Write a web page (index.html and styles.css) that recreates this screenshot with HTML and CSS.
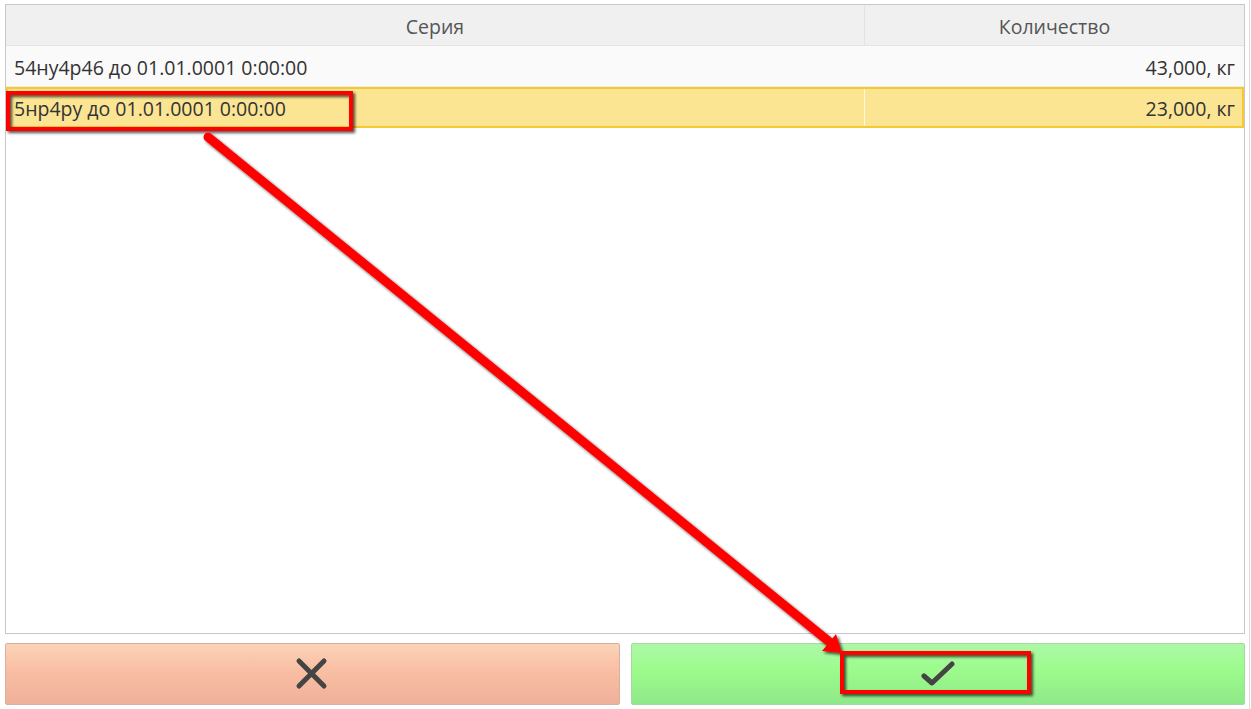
FILE: index.html
```html
<!DOCTYPE html>
<html lang="ru">
<head>
<meta charset="utf-8">
<title>Серии</title>
<link rel="stylesheet" href="styles.css">
</head>
<body>
<div class="page">
  <div class="grid">
    <div class="row head">
      <div class="cell c1">Серия</div>
      <div class="cell c2">Количество</div>
    </div>
    <div class="row">
      <div class="cell c1 left">54ну4р46 до 01.01.0001 0:00:00</div>
      <div class="cell c2 right">43,000, кг</div>
    </div>
    <div class="row sel">
      <div class="cell c1 left">5нр4ру до 01.01.0001 0:00:00</div>
      <div class="cell c2 right">23,000, кг</div>
    </div>
  </div>
  <div class="buttons">
    <button class="btn cancel" type="button" aria-label="Отмена">
      <svg width="34" height="34" viewBox="0 0 34 34"><path d="M4 4 L29 29 M29 4 L4 29" stroke="#444" stroke-width="5" stroke-linecap="round" fill="none"/></svg>
    </button>
    <button class="btn ok" type="button" aria-label="OK">
      <svg width="34" height="28" viewBox="0 0 34 28"><path d="M3 16 L11 23 L31 4" stroke="#444" stroke-width="5" stroke-linecap="round" stroke-linejoin="round" fill="none"/></svg>
    </button>
  </div>
  <div class="scrollline"></div>
  <svg class="annot" width="1251" height="709" viewBox="0 0 1251 709">
    <defs>
      <filter id="sh" x="-20%" y="-20%" width="140%" height="140%">
        <feGaussianBlur in="SourceAlpha" stdDeviation="1.5"/>
        <feOffset dx="2" dy="2" result="b"/>
        <feComponentTransfer><feFuncA type="linear" slope="0.7"/></feComponentTransfer>
        <feMerge><feMergeNode/><feMergeNode in="SourceGraphic"/></feMerge>
      </filter>
    </defs>
    <g filter="url(#sh)">
      <rect x="8" y="93" width="343" height="36" fill="none" stroke="#f00" stroke-width="4"/>
      <rect x="842" y="653" width="187" height="39" fill="none" stroke="#f00" stroke-width="4"/>
      <line x1="208" y1="137" x2="832" y2="644" stroke="#f00" stroke-width="9" stroke-linecap="round"/>
      <polygon points="842,653 822,651 836,634" fill="#f00"/>
    </g>
  </svg>
</div>
</body>
</html>
```
FILE: styles.css
```css
html, body {
  margin: 0;
  padding: 0;
  background: #fff;
}
body {
  font-family: "Open Sans", "Liberation Sans", sans-serif;
  width: 1251px;
  height: 709px;
  overflow: hidden;
}
.page {
  position: relative;
  box-sizing: border-box;
  width: 1251px;
  height: 709px;
  padding: 4px 6px 4px 5px;
  display: flex;
  flex-direction: column;
  gap: 9px;
}
.grid {
  box-sizing: border-box;
  height: 630px;
  border: 1px solid #c8c8c8;
  background: #fff;
  display: flex;
  flex-direction: column;
}
.row {
  display: flex;
  height: 41px;
  box-sizing: border-box;
  background: #fafafa;
  border-bottom: 1px solid #ececec;
}
.row.head {
  background: #f0f0f0;
  border-bottom: 1px solid #e4e4e4;
  color: #555;
}
.row.sel {
  background: #fbe593;
  border: 2px solid #f8c92e;
  color: #333;
}
.cell {
  display: flex;
  align-items: center;
  font-size: 19.5px;
  padding-top: 2px;
  color: #333;
  box-sizing: border-box;
  white-space: nowrap;
}
.head .cell {
  justify-content: center;
  color: #555;
}
.c1 {
  width: 859px;
}
.head .c1 {
  border-right: 1px solid #e2e2e2;
}
.c2 {
  flex: 1;
}
.sel .c1 {
  width: 857px;
  border-right: 1px solid #fff8e0;
}
.left {
  padding-left: 8px;
}
.sel .left {
  padding-left: 6px;
}
.right {
  justify-content: flex-end;
  padding-right: 9px;
}
.sel .right {
  padding-right: 7px;
}
.buttons {
  display: flex;
  gap: 11px;
  height: 62px;
}
.btn {
  flex: 1;
  margin: 0;
  padding: 0;
  border: 1px solid #c9c9c9;
  border-radius: 2px;
  display: flex;
  align-items: center;
  justify-content: center;
  cursor: pointer;
}
.cancel {
  background: linear-gradient(#fbd3b6, #f9bea4 45%, #efb09a);
  border-color: #d8b0a0;
}
.ok {
  background: linear-gradient(#adf8a6, #9cfb8c 45%, #8fe889);
  border-color: #a8d8a0;
}
.scrollline {
  position: absolute;
  top: 0;
  right: 1px;
  width: 1px;
  height: 709px;
  background: #dcdcdc;
}
.annot {
  position: absolute;
  left: 0;
  top: 0;
  pointer-events: none;
}
```
